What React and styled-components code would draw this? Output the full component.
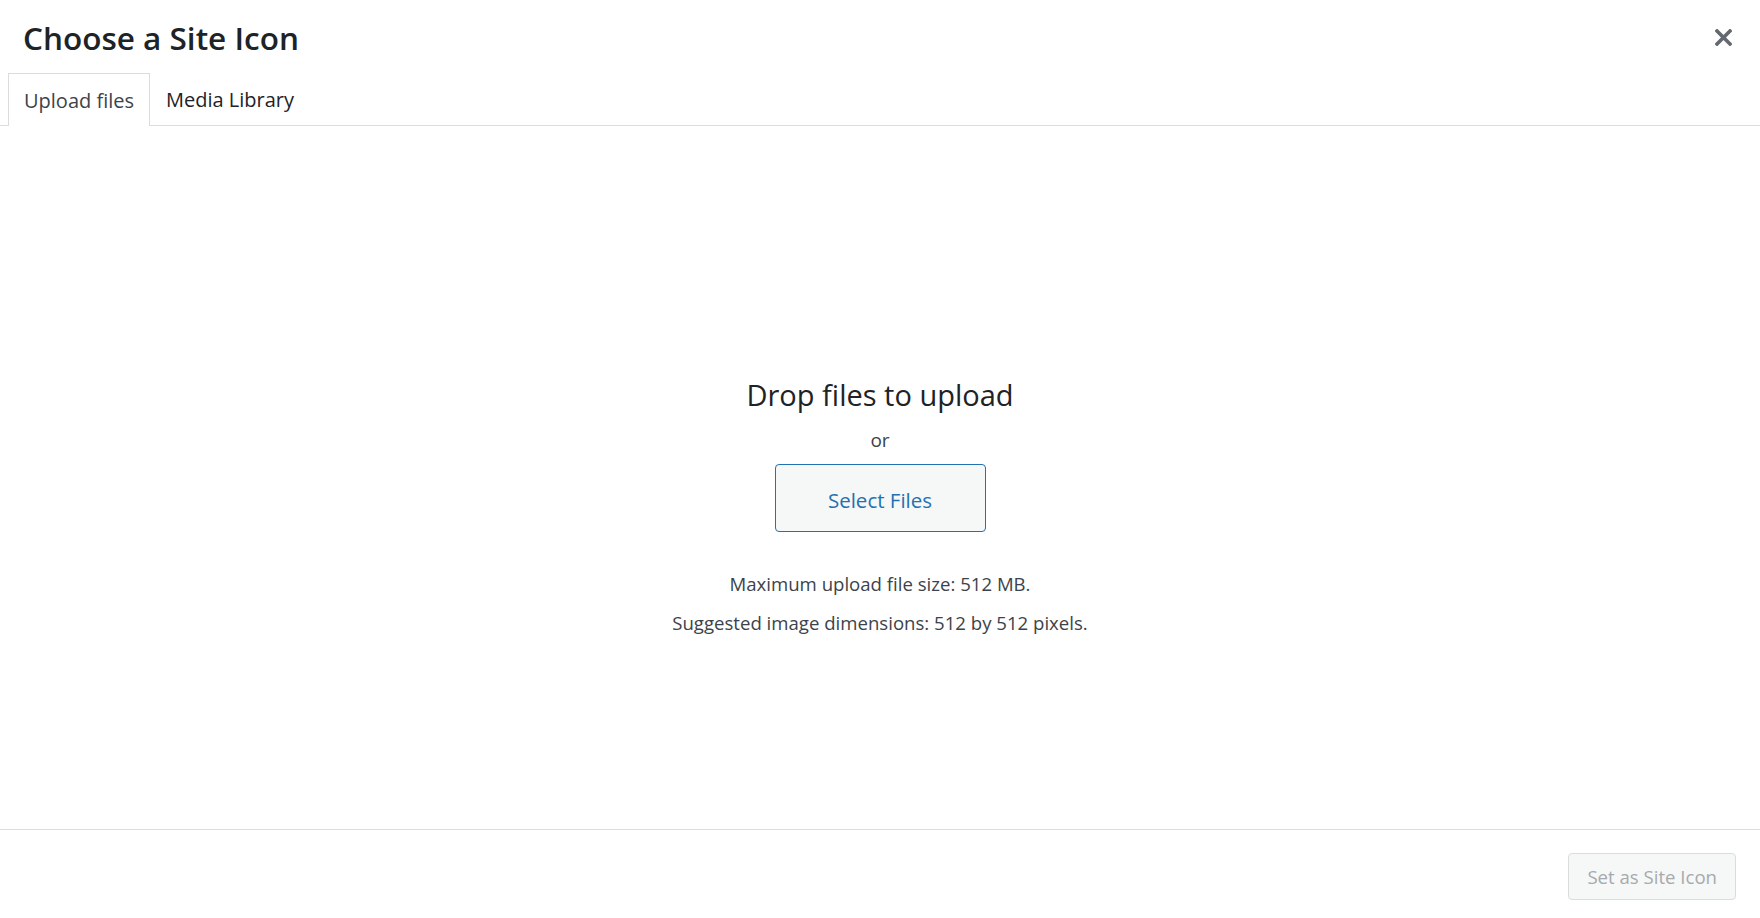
import React from 'react'
import styled, { createGlobalStyle } from 'styled-components'

const GlobalStyle = createGlobalStyle`
  html, body {
    margin: 0;
    padding: 0;
    background: #fff;
    font-family: "Open Sans", "Noto Sans", sans-serif;
  }
`

const App = () => {
  return (
    <Frame>
      <GlobalStyle />
      <Header>
        <Title>Choose a Site Icon</Title>
        <CloseButton aria-label="Close dialog">
          <svg width="17" height="17" viewBox="0 0 17 17">
            <path d="M2 2 L15 15 M15 2 L2 15" stroke="#646970" strokeWidth="3.6" strokeLinecap="square" />
          </svg>
        </CloseButton>
      </Header>
      <Router>
        <Tab $active>Upload files</Tab>
        <Tab>Media Library</Tab>
      </Router>
      <Content>
        <DropTitle>Drop files to upload</DropTitle>
        <Or>or</Or>
        <SelectButton>Select Files</SelectButton>
        <Info>Maximum upload file size: 512 MB.</Info>
        <Info $tight>Suggested image dimensions: 512 by 512 pixels.</Info>
      </Content>
      <Footer>
        <DisabledButton disabled>Set as Site Icon</DisabledButton>
      </Footer>
    </Frame>
  )
}

export default App

const Frame = styled.div`
    height: 918px;
    display: flex;
    flex-direction: column;
    overflow: hidden;
`

const Header = styled.div`
    height: 73px;
    display: flex;
    align-items: center;
    justify-content: space-between;
    padding: 2px 28px 0 23px;
    box-sizing: border-box;
`

const Title = styled.h1`
    margin: 0;
    font-size: 31.5px;
    font-weight: 600;
    color: #1d2327;
    line-height: 1.2;
`

const CloseButton = styled.button`
    border: 0;
    background: none;
    padding: 0;
    width: 17px;
    height: 17px;
    display: flex;
    cursor: pointer;
`

const Router = styled.div`
    display: flex;
    padding-left: 8px;
    border-bottom: 1px solid #dcdcde;
    height: 52px;
`

const Tab = styled.div`
    height: ${p => p.$active ? '53px' : '52px'};
    box-sizing: border-box;
    display: flex;
    align-items: center;
    padding: 0 15px;
    font-size: 20px;
    color: ${p => p.$active ? '#3c434a' : '#1d2327'};
    background: ${p => p.$active ? '#fff' : 'transparent'};
    border: 1px solid ${p => p.$active ? '#dcdcde' : 'transparent'};
    border-bottom: 0;
    margin-bottom: ${p => p.$active ? '-1px' : '0'};
`

const Content = styled.div`
    flex: 1;
    display: flex;
    flex-direction: column;
    align-items: center;
    padding-top: 249px;
    border-bottom: 1px solid #dcdcde;
`

const DropTitle = styled.div`
    font-size: 29px;
    line-height: 40px;
    color: #1d2327;
`

const Or = styled.div`
    margin-top: 11px;
    font-size: 19px;
    line-height: 28px;
    color: #3c434a;
`

const SelectButton = styled.button`
    margin-top: 10px;
    width: 211px;
    height: 68px;
    padding: 3px 0 0;
    border: 1px solid #2271b1;
    border-radius: 4px;
    background: #f6f7f7;
    color: #2271b1;
    font-family: inherit;
    font-size: 20.5px;
    cursor: pointer;
`

const Info = styled.div`
    margin-top: ${p => p.$tight ? '11px' : '38px'};
    font-size: 18.6px;
    line-height: 28px;
    color: #3c434a;
`

const Footer = styled.div`
    height: 88px;
    display: flex;
    justify-content: flex-end;
    padding: 23px 24px 0 0;
    box-sizing: border-box;
`

const DisabledButton = styled.button`
    height: 47px;
    padding: 0 18px;
    border: 1px solid #dcdcde;
    border-radius: 4px;
    background: #f6f7f7;
    color: #a7aaad;
    font-family: inherit;
    font-size: 18.6px;
`
